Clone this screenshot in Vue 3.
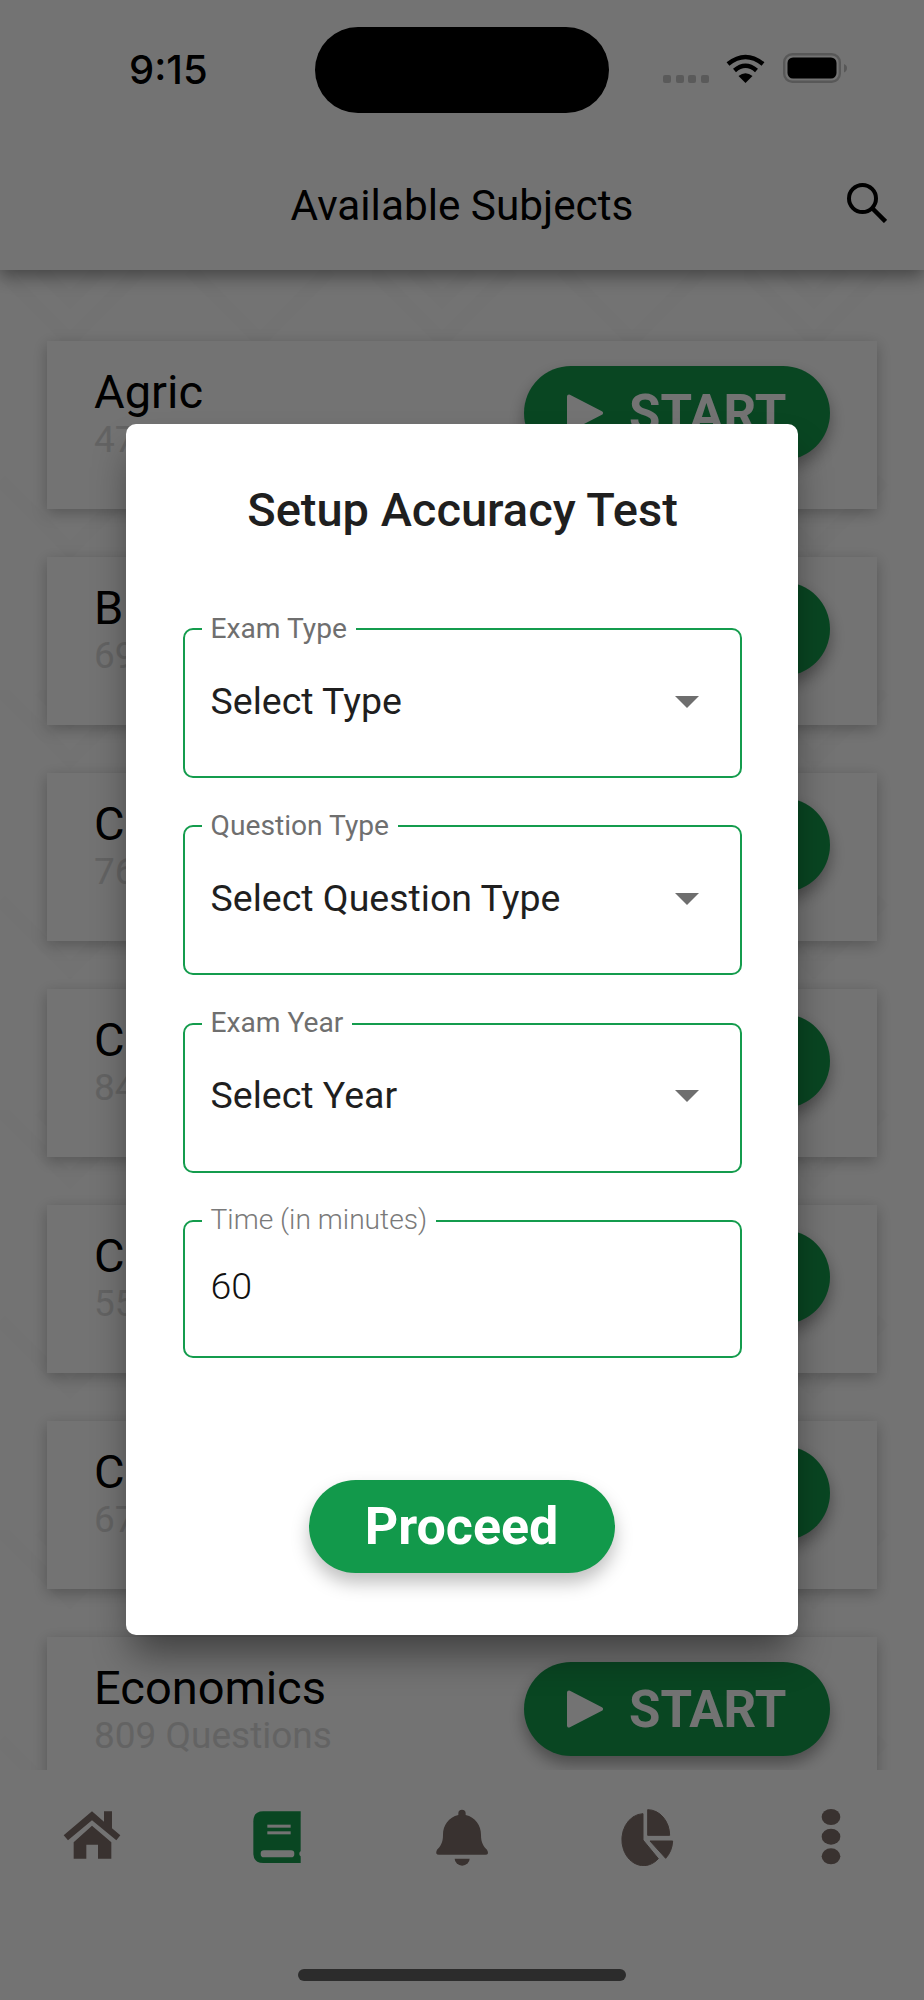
<template>
  <div class="phone">
    <header class="top">
      <div class="status">
        <span class="time">9:15</span>
        <div class="island"></div>
        <div class="signal"><i v-for="n in 4" :key="n"></i></div>
        <svg class="wifi" viewBox="0 0 39 29">
          <path d="M2 10 Q19.5 -4 37 10" fill="none" stroke="#000" stroke-width="4.5" />
          <path d="M8.5 16.5 Q19.5 7 30.5 16.5" fill="none" stroke="#000" stroke-width="4.5" />
          <path d="M19.5 29 L12.5 22 Q19.5 16.5 26.5 22 Z" fill="#000" />
        </svg>
        <svg class="battery" viewBox="0 0 64 30">
          <rect x="1.2" y="1.2" width="55.6" height="27.6" rx="8" fill="none" stroke="#c4c4c4" stroke-width="2.4" />
          <rect x="4.5" y="4.5" width="49" height="21" rx="5.5" fill="#000" />
          <path d="M61 11 Q64 12 64 15 Q64 18 61 19.5 Z" fill="#c4c4c4" />
        </svg>
      </div>
      <div class="title-row">
        <span></span>
        <h1>Available Subjects</h1>
        <svg class="search" viewBox="0 0 40 40">
          <circle cx="15.5" cy="15.5" r="13.5" fill="none" stroke="#000" stroke-width="4" />
          <path d="M25 25 L38.5 38.5" stroke="#000" stroke-width="4.5" />
        </svg>
      </div>
    </header>

    <main class="list">
      <svg class="pattern" width="924" height="1500">
        <defs>
          <pattern id="zig" width="372" height="420" patternUnits="userSpaceOnUse">
            <path d="M0 0 L70 70 L140 0 M190 0 L260 70 L330 0 M40 0 L70 30 L100 0 M0 210 L70 280 L140 210 M190 210 L260 280 L330 210" fill="none" stroke="#000" stroke-width="14" />
          </pattern>
        </defs>
        <rect width="924" height="1500" fill="url(#zig)" opacity="0.01" />
      </svg>
      <div class="card" v-for="s in subjects" :key="s.name">
        <div class="info">
          <div class="name">{{ s.name }}</div>
          <div class="count">{{ s.count }} Questions</div>
        </div>
        <button class="start">
          <svg class="play" viewBox="0 0 38 38">
            <path d="M3 2.5 L35 19 L3 35.5 Z" fill="#fff" stroke="#fff" stroke-width="4" stroke-linejoin="round" />
          </svg>
          START
        </button>
      </div>
    </main>

    <nav class="tabs">
      <div class="tab">
        <svg viewBox="40 55 175 175">
          <path class="ink" d="M127 65 L42 137 L55 152 L127 92 L200 152 L212 137 L187 116 V65 H163 V96 Z" />
          <path class="ink" d="M127 108 L185 158 V207 H145 V165 H110 V207 H72 V158 Z" />
        </svg>
      </div>
      <div class="tab">
        <svg viewBox="594 55 175 175">
          <path class="green" d="M640 65 H752 V220 H640 Q610 220 610 190 V95 Q610 65 640 65 Z" />
          <rect x="632" y="182" width="101" height="21" rx="10" fill="#fff" />
          <circle cx="756" cy="192" r="8" fill="#fff" />
          <rect x="652" y="105" width="70" height="9" fill="#fff" />
          <rect x="652" y="125" width="70" height="9" fill="#fff" />
        </svg>
      </div>
      <div class="tab">
        <svg viewBox="38 55 175 175">
          <path class="ink" d="M125 60 A11 11 0 0 1 136 71 V76 C165 82 182 108 182 135 C182 160 190 170 200 180 Q208 195 195 195 H56 Q43 195 50 180 C60 170 68 160 68 135 C68 108 85 82 114 76 V71 A11 11 0 0 1 125 60 Z" />
          <path class="ink" d="M103 207 H148 A22.5 21 0 0 1 103 207 Z" />
        </svg>
      </div>
      <div class="tab">
        <svg viewBox="592 55 175 175">
          <path class="ink pie" d="M667 72 A65 78 0 1 0 713 207 L667 151 Z" />
          <path class="ink pie" d="M681 60 A66 77 0 0 1 747 137 H681 Z" />
          <path class="ink pie" d="M688 154 H756 A66 77 0 0 1 735 206 Z" />
        </svg>
      </div>
      <div class="tab">
        <svg viewBox="1147 55 175 175">
          <ellipse class="ink" cx="1234" cy="82" rx="28" ry="24" />
          <ellipse class="ink" cx="1234" cy="141" rx="28" ry="24" />
          <ellipse class="ink" cx="1234" cy="200" rx="28" ry="24" />
        </svg>
      </div>
    </nav>
    <div class="home-bar"></div>

    <div class="backdrop">
      <div class="modal">
        <h2>Setup Accuracy Test</h2>

        <div class="field" v-for="f in selects" :key="f.label">
          <label>{{ f.label }}</label>
          <span class="value">{{ f.value }}</span>
          <span class="arrow"></span>
        </div>

        <div class="field short">
          <label class="thin">Time (in minutes)</label>
          <span class="value thin">60</span>
        </div>

        <button class="proceed">Proceed</button>
      </div>
    </div>
  </div>
</template>

<script setup>
const subjects = [
  { name: 'Agric', count: 472 },
  { name: 'Biology', count: 691 },
  { name: 'Chemistry', count: 763 },
  { name: 'Civic Education', count: 842 },
  { name: 'Commerce', count: 551 },
  { name: 'CRK', count: 674 },
  { name: 'Economics', count: 809 }
]

const selects = [
  { label: 'Exam Type', value: 'Select Type' },
  { label: 'Question Type', value: 'Select Question Type' },
  { label: 'Exam Year', value: 'Select Year' }
]
</script>

<style>
html, body { margin: 0; padding: 0; }
</style>

<style scoped>
.phone {
  position: relative;
  width: 924px;
  height: 2000px;
  overflow: hidden;
  display: flex;
  flex-direction: column;
  background: #fff;
  font-family: Roboto, "Liberation Sans", sans-serif;
  color: #000;
}

.top {
  height: 270px;
  flex: none;
  background: #fff;
  box-shadow: 0 5px 18px rgba(0, 0, 0, 0.45);
  position: relative;
  z-index: 2;
}

.status {
  height: 140px;
  display: flex;
  align-items: flex-start;
}

.time {
  width: 186px;
  margin-top: 47px;
  padding-left: 129px;
  font-family: Inter, Roboto, sans-serif;
  font-size: 40px;
  font-weight: 500;
  line-height: 46px;
}

.island {
  width: 294px;
  height: 86px;
  margin-top: 27px;
  border-radius: 43px;
  background: #000;
}

.signal {
  display: flex;
  gap: 4.6px;
  margin: 75px 0 0 54px;
}

.signal i {
  width: 8px;
  height: 8px;
  border-radius: 2px;
  background: #c8c8c8;
}

.wifi {
  width: 39px;
  height: 29px;
  margin: 54px 0 0 17px;
}

.battery {
  width: 64px;
  height: 30px;
  margin: 53px 0 0 18px;
}

.title-row {
  display: grid;
  grid-template-columns: 1fr auto 1fr;
  align-items: center;
  height: 130px;
  padding: 0 37px;
}

.title-row h1 {
  margin: 2px 0 0;
  font-size: 42.3px;
  font-weight: 400;
  line-height: 50px;
}

.search {
  width: 40px;
  height: 40px;
  justify-self: end;
  margin-top: -4px;
}

.list {
  position: relative;
  flex: 1;
  min-height: 0;
  padding: 71px 47px 0;
  display: flex;
  flex-direction: column;
  gap: 48px;
}

.pattern {
  position: absolute;
  top: 0;
  left: 0;
}

.card {
  position: relative;
  flex: none;
  height: 168px;
  box-sizing: border-box;
  background: #fff;
  box-shadow: 0 4px 14px rgba(0, 0, 0, 0.25);
  display: flex;
  align-items: flex-start;
  justify-content: space-between;
  padding: 25px 47px 0;
}

.name {
  font-size: 47px;
  line-height: 52px;
}

.count {
  font-size: 37px;
  line-height: 44px;
  color: #dcdcdc;
}

.start {
  width: 306px;
  height: 94px;
  flex: none;
  border: 0;
  border-radius: 47px;
  background: #149c4d;
  color: #fff;
  font-family: inherit;
  font-size: 51px;
  font-weight: 700;
  display: flex;
  align-items: center;
  gap: 25px;
  padding: 0 0 0 42px;
  box-shadow: 0 8px 16px rgba(0, 0, 0, 0.35);
}

.play {
  width: 38px;
  height: 38px;
  flex: none;
}

.tabs {
  position: absolute;
  left: 0;
  right: 0;
  top: 1770px;
  height: 230px;
  background: #fff;
  z-index: 2;
  display: grid;
  grid-template-columns: repeat(5, 1fr);
  align-items: start;
  padding-top: 38px;
  box-sizing: border-box;
}

.tab {
  display: flex;
  justify-content: center;
}

.tab svg {
  width: 58.33px;
  height: 58.33px;
}

.ink {
  fill: #7f6f6a;
}

.pie {
  stroke: #7f6f6a;
  stroke-width: 3;
  stroke-linejoin: round;
}

.green {
  fill: #149c4d;
}

.home-bar {
  position: absolute;
  left: 298px;
  top: 1969px;
  width: 328px;
  height: 12px;
  border-radius: 6px;
  background: #626262;
  z-index: 3;
}

.backdrop {
  position: absolute;
  inset: 0;
  z-index: 5;
  background: rgba(0, 0, 0, 0.55);
  display: flex;
  justify-content: center;
  align-items: flex-start;
  padding-top: 424px;
  box-sizing: border-box;
}

.modal {
  width: 672px;
  height: 1211px;
  box-sizing: border-box;
  padding: 57.5px 56px 0 57px;
  background: #fff;
  border-radius: 10px;
  box-shadow: 0 24px 38px -6px rgba(0, 0, 0, 0.45);
  display: flex;
  flex-direction: column;
  align-items: stretch;
}

.modal h2 {
  margin: 0 0 90.5px;
  font-size: 47px;
  font-weight: 500;
  line-height: 56px;
  text-align: center;
  color: #1f1f1f;
}

.field {
  position: relative;
  height: 150px;
  margin-bottom: 47.3px;
  box-sizing: border-box;
  border: 2.5px solid #149c4d;
  border-radius: 10px;
  padding: 48.5px 25.5px 0;
  display: flex;
  justify-content: space-between;
}

.field.short {
  height: 138px;
  margin-bottom: 122px;
  padding-top: 42.5px;
}

.field label {
  position: absolute;
  left: 16.5px;
  top: -18.5px;
  padding: 0 9px;
  background: #fff;
  font-size: 28.2px;
  line-height: 34px;
  color: #6f6f6f;
}

.field label.thin {
  font-weight: 300;
  color: #7a7a7a;
}

.value {
  font-size: 37.5px;
  line-height: 44px;
  color: #1f1f1f;
}

.value.thin {
  font-weight: 300;
  color: #111;
}

.arrow {
  width: 0;
  height: 0;
  margin: 17px 16px 0 0;
  border-left: 12px solid transparent;
  border-right: 12px solid transparent;
  border-top: 12px solid #6e6e6e;
}

.proceed {
  align-self: center;
  width: 306px;
  height: 93px;
  margin-right: 2px;
  border: 0;
  border-radius: 47px;
  background: #12994b;
  color: #fff;
  font-family: inherit;
  font-size: 52px;
  font-weight: 700;
  box-shadow: 0 10px 18px rgba(0, 0, 0, 0.25);
}
</style>
